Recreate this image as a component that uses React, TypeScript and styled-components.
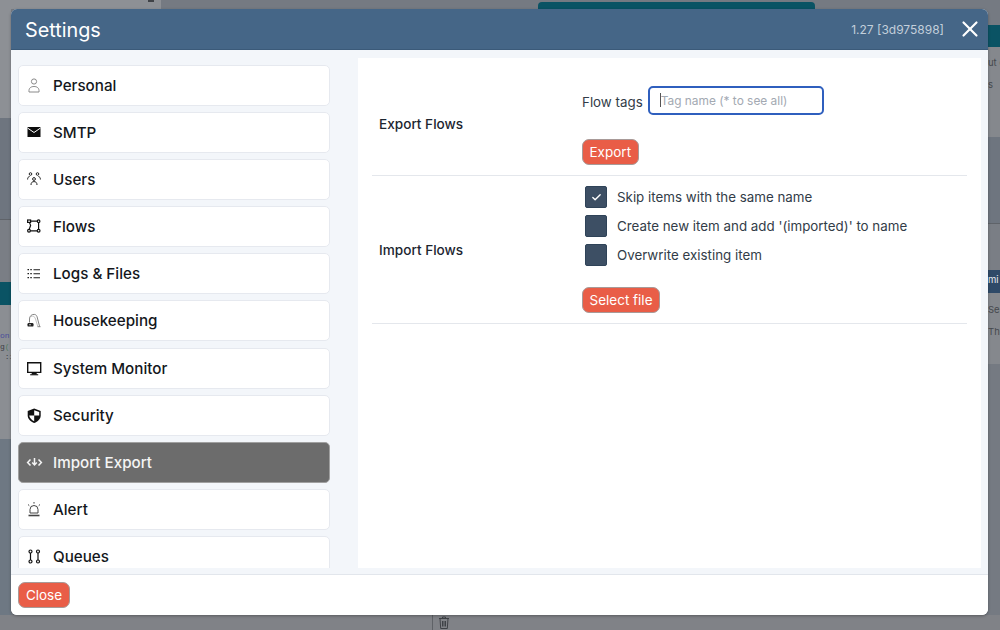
import React from 'react';
import styled, { createGlobalStyle } from 'styled-components';
import { X, Check } from 'lucide-react';

const GlobalStyle = createGlobalStyle`
  html, body {
    margin: 0;
    padding: 0;
    width: 1000px;
    height: 630px;
    overflow: hidden;
    font-family: Inter, "Liberation Sans", sans-serif;
  }
  * {
    box-sizing: border-box;
  }
`;

const Page = styled.div`
  position: relative;
  width: 1000px;
  height: 630px;
  background: #757a82;
  display: flex;
  flex-direction: column;
  overflow: hidden;
`;

const TopStrip = styled.div`
  height: 9px;
  display: flex;
  flex: none;
`;

const TopPanel = styled.div`
  width: 161px;
  padding-right: 7px;
  display: flex;
  justify-content: flex-end;
  background: #8d9095;
`;

const TopTick = styled.div`
  width: 6px;
  height: 2px;
  background: #3f4247;
`;

const TealTab = styled.div`
  width: 277px;
  height: 7px;
  margin: 2px 0 0 377px;
  background: #0a5364;
  border-radius: 4px 4px 0 0;
`;

const Middle = styled.div`
  flex: 1;
  display: flex;
  justify-content: space-between;
`;

const SideStrip = styled.div<{ $w: number }>`
  width: ${(p) => p.$w}px;
  display: flex;
  flex-direction: column;
`;

const Band = styled.div<{ $h: number; $bg: string }>`
  height: ${(p) => p.$h}px;
  background: ${(p) => p.$bg};
  flex: none;
`;

const CodeBand = styled(Band)`
  padding-top: 26px;
  overflow: hidden;
  white-space: pre;
  font-family: "Liberation Mono", monospace;
  font-size: 8px;
  line-height: 10.5px;
  color: #3c3f45;
`;

const CodeWord = styled.span<{ $color: string }>`
  color: ${(p) => p.$color};
`;

const TextBand = styled(Band)<{ $pt: number; $color?: string; $gap?: number }>`
  padding-top: ${(p) => p.$pt}px;
  overflow: hidden;
  white-space: pre;
  font-size: 9.5px;
  line-height: ${(p) => p.$gap || 12}px;
  color: ${(p) => p.$color || '#45484d'};
`;

const Bottom = styled.div`
  height: 15px;
  flex: none;
  display: flex;
  align-items: center;
  padding-left: 432px;
  background: #808287;
  color: #3f4247;
`;

const BottomRule = styled.div`
  width: 1px;
  height: 15px;
  background: #5f6267;
  margin-right: 5px;
`;

const Modal = styled.div`
  position: absolute;
  left: 11px;
  top: 9px;
  width: 977px;
  height: 606px;
  display: flex;
  flex-direction: column;
  border-radius: 6px;
  background: #f3f6fa;
  overflow: hidden;
  box-shadow: 0 1px 3px rgba(0, 0, 0, 0.3);
`;

const Header = styled.header`
  height: 41px;
  flex: none;
  display: flex;
  align-items: center;
  padding: 0 5px 0 14px;
  background: #456687;
  border-bottom: 1px solid #3b5a79;
  color: #fff;
`;

const Title = styled.h1`
  margin: 2px 0 0;
  flex: 1;
  font-size: 19.8px;
  font-weight: 400;
  color: #fff;
`;

const Version = styled.span`
  font-size: 12px;
  color: #c3cfdb;
  margin-right: 13px;
`;

const CloseIcon = styled.button`
  border: 0;
  padding: 0;
  background: none;
  color: #fff;
  display: flex;
`;

const Body = styled.div`
  flex: 1;
  min-height: 0;
  display: flex;
  padding: 8px 7px 6px 7px;
`;

const Sidebar = styled.nav`
  width: 312px;
  margin-right: 28px;
  flex: none;
  display: flex;
  flex-direction: column;
  gap: 6.1px;
  overflow: hidden;
  padding-top: 7px;
`;

const NavItem = styled.div<{ $active?: boolean }>`
  height: 41px;
  flex: none;
  display: flex;
  align-items: center;
  padding-left: 8px;
  border-radius: 5px;
  border: 1px solid ${(p) => (p.$active ? '#a0a0a0' : '#e6e9ef')};
  background: ${(p) => (p.$active ? '#6c6c6c' : '#fff')};
  color: ${(p) => (p.$active ? '#f4f4f4' : '#14171c')};
  font-size: 15.2px;
  font-weight: 500;
`;

const NavIcon = styled.svg`
  width: 15px;
  height: 15px;
  flex: none;
  margin-right: 11px;
  overflow: visible;
`;

const Content = styled.main`
  flex: 1;
  background: #fff;
  padding: 19px 14px 0 14px;
`;

const Section = styled.section<{ $h: number; $pb?: number }>`
  height: ${(p) => p.$h}px;
  padding-bottom: ${(p) => p.$pb || 0}px;
  display: flex;
  align-items: center;
  border-bottom: 1px solid #e4e7ec;
`;

const SectionLabel = styled.div<{ $lift?: number }>`
  width: 210px;
  padding-left: 7px;
  margin-bottom: ${(p) => p.$lift || 0}px;
  flex: none;
  font-size: 13.6px;
  font-weight: 500;
  color: #1c2530;
`;

const SectionBody = styled.div`
  display: flex;
  flex-direction: column;
  align-items: flex-start;
`;

const TagRow = styled.div`
  display: flex;
  align-items: center;
  font-size: 13.35px;
  color: #323c48;
  margin-bottom: 24px;
`;

const TagLabel = styled.span`
  padding-top: 3px;
`;

const TagInput = styled.div`
  width: 176px;
  height: 29px;
  margin-left: 5px;
  padding-left: 10px;
  display: flex;
  align-items: center;
  border: 2px solid #2f5fbe;
  border-radius: 5px;
  font-size: 11.9px;
  color: #a3a9b2;
`;

const Caret = styled.span`
  width: 1px;
  height: 14px;
  background: #555;
`;

const OptionRow = styled.label`
  display: flex;
  align-items: center;
  height: 22px;
  margin-bottom: 7px;
  padding-left: 3px;
  font-size: 13.35px;
  color: #323c48;
`;

const Box = styled.span`
  width: 22px;
  height: 22px;
  margin-right: 10px;
  display: flex;
  align-items: center;
  justify-content: center;
  border-radius: 2px;
  border: 1px solid #2f4358;
  background: #3d4f64;
  color: #fff;
`;

const ActionButton = styled.button<{ $mt?: number }>`
  height: 26px;
  min-width: 52px;
  margin-top: ${(p) => p.$mt || 0}px;
  padding: 0 6.5px;
  border: 1px solid #a89a98;
  border-radius: 7px;
  background: #e95d47;
  color: #fff;
  font-family: inherit;
  font-size: 13.5px;
`;

const Footer = styled.footer`
  height: 41px;
  flex: none;
  display: flex;
  align-items: center;
  padding-left: 7px;
  background: #fff;
  border-top: 1px solid #e2e6ec;
`;

const icons: Record<string, React.ReactNode> = {
  Personal: (
    <g fill="none" stroke="#8a8a8a" strokeWidth="1">
      <circle cx="7" cy="3.5" r="2.6" />
      <path d="M2 14 C1.5 9.5 4.5 8.5 7 8.5 C9.5 8.5 12.5 9.5 12 14 Z" />
    </g>
  ),
  SMTP: (
    <g>
      <rect x="0.5" y="2" width="13" height="10" fill="#0d0d0d" />
      <path d="M0.5 3l6.5 4.5L13.5 3" fill="none" stroke="#fff" strokeWidth="1" />
    </g>
  ),
  Users: (
    <g fill="none" stroke="#222" strokeWidth="1">
      <circle cx="3.5" cy="2" r="1.3" />
      <circle cx="10.5" cy="2" r="1.3" />
      <circle cx="7" cy="7" r="1.4" />
      <path d="M0.6 7.5c0-2 .8-2.8 2-3M13.4 7.5c0-2-.8-2.8-2-3M4 13c0-2.4 1.2-3.4 3-3.4s3 1 3 3.4" />
    </g>
  ),
  Flows: (
    <g fill="none" stroke="#111" strokeWidth="1.2">
      <rect x="0.6" y="1" width="3" height="2.4" />
      <circle cx="11.6" cy="2.2" r="1.3" />
      <circle cx="2" cy="11.8" r="1.4" />
      <circle cx="11.6" cy="11.8" r="1.4" />
      <path d="M3.6 2.2h6.7M3.4 11.8h6.9M2.4 3.4l1.2 3-1.4 4M11.6 3.5v7" />
    </g>
  ),
  'Logs & Files': (
    <g fill="#1d1d1d">
      <path d="M0.5 3h1.5v1.3H.5zM3.3 3h1.5v1.3H3.3zM.5 7h1.5v1.3H.5zM3.3 7h1.5v1.3H3.3zM.5 11h1.5v1.3H.5zM3.3 11h1.5v1.3H3.3z" />
      <path d="M6.5 3.2H13v1H6.5zM6.5 7.2H13v1H6.5zM6.5 11.2H13v1H6.5z" />
    </g>
  ),
  Housekeeping: (
    <g fill="none">
      <path d="M2.5 9.5V6C2.5 3 4.7 1.2 7.3 1.4 9.3 1.6 10 3 10.4 5L12.6 13.5" stroke="#777" strokeWidth="0.9" />
      <path d="M4 3.5C6 2.6 8 3.5 8.5 6L10.8 13.5" stroke="#aaa" strokeWidth="0.7" />
      <rect x="0.5" y="10" width="6" height="3.6" rx="1.2" fill="#222" />
      <circle cx="3" cy="11.8" r="0.7" fill="#fff" />
      <path d="M10.5 13.7h3" stroke="#777" strokeWidth="0.9" />
    </g>
  ),
  'System Monitor': (
    <g>
      <path d="M.7 1.8h13v9.6H.7z" fill="none" stroke="#111" strokeWidth="1.4" />
      <path d="M4.7 11.5h5V13.5H4.7z" fill="#111" />
      <path d="M3.2 13.2h8v1.1h-8z" fill="#111" />
    </g>
  ),
  Security: (
    <g>
      <path d="M7.2.5 13.7 3v4.5c0 3.5-3 6-6.5 7.5C3.7 13.5.7 11 .7 7.5V3z" fill="#111" />
      <path d="M7.2 2.2 12.2 4v3.5H7.2zM7.2 7.5v5.7C4.7 12 2.5 10 2.2 7.5z" fill="#fff" />
    </g>
  ),
  'Import Export': (
    <g fill="none" stroke="#f5f5f5" strokeWidth="1.5">
      <path d="M3.5 4.5.6 7.5l2.9 3M11.5 4.5l2.9 3-2.9 3" />
      <path d="M7.5 3v6.5M5.2 7.6l2.3 2.4 2.3-2.4" />
    </g>
  ),
  Alert: (
    <g fill="none" stroke="#444" strokeWidth="1">
      <path d="M3 11V7.5a4 4 0 0 1 8 0V11z" />
      <path d="M1.5 13.5h11" strokeWidth="1.6" />
      <path d="M7 0v1.6M1 2.5l1.3 1.2M13 2.5l-1.3 1.2" />
    </g>
  ),
  Queues: (
    <g fill="none" stroke="#111" strokeWidth="1.2">
      <circle cx="3.5" cy="2.5" r="1.5" />
      <circle cx="3.5" cy="12.5" r="1.5" />
      <circle cx="11" cy="2.5" r="1.5" />
      <circle cx="11" cy="12.5" r="1.5" />
      <path d="M3.5 4v7M11 4v7" />
    </g>
  ),
};

const navItems = Object.keys(icons);

const options = [
  { label: 'Skip items with the same name', checked: true },
  { label: "Create new item and add '(imported)' to name", checked: false },
  { label: 'Overwrite existing item', checked: false },
];

const App: React.FC = () => {
  return (
    <Page>
      <GlobalStyle />
      <TopStrip>
        <TopPanel>
          <TopTick />
        </TopPanel>
        <TealTab />
      </TopStrip>
      <Middle>
        <SideStrip $w={11}>
          <Band $h={109} $bg="#8d9095" />
          <Band $h={101} $bg="#6e757f" />
          <Band $h={1} $bg="#5f6369" />
          <Band $h={62} $bg="#7a7e85" />
          <Band $h={23} $bg="#0a5364" />
          <CodeBand $h={134} $bg="#8b8e93">
            <CodeWord $color="#4a4d9a">on</CodeWord>
            {'\ng'}
            <CodeWord $color="#4c7a5c">(</CodeWord>
            {'\n :i'}
          </CodeBand>
          <Band $h={176} $bg="#6e7883" />
        </SideStrip>
        <SideStrip $w={12}>
          <Band $h={16} $bg="#757a82" />
          <Band $h={22} $bg="#0a5364" />
          <TextBand $h={90} $bg="#85888d" $pt={5} $gap={22}>{'ut c\ns'}</TextBand>
          <Band $h={86} $bg="#6e757f" />
          <Band $h={1} $bg="#5f6369" />
          <Band $h={46} $bg="#7a7e85" />
          <TextBand $h={23} $bg="#2f4a68" $pt={4} $color="#e8edf2">mi</TextBand>
          <TextBand $h={71} $bg="#85888d" $pt={6} $gap={22}>{'Ser\nThr'}</TextBand>
          <Band $h={251} $bg="#757a82" />
        </SideStrip>
      </Middle>
      <Bottom>
        <BottomRule />
        <svg width="12" height="13" viewBox="0 0 12 13" fill="none" stroke="currentColor" strokeWidth="1">
          <path d="M1 2.5h10M4.5 2.5V1h3v1.5M2 2.5l.7 10h6.6l.7-10M4.5 5v5.5M6 5v5.5M7.5 5v5.5" />
        </svg>
      </Bottom>
      <Modal>
        <Header>
          <Title>Settings</Title>
          <Version>1.27 [3d975898]</Version>
          <CloseIcon>
            <X size={26} strokeWidth={2} />
          </CloseIcon>
        </Header>
        <Body>
          <Sidebar>
            {navItems.map((name) => (
              <NavItem key={name} $active={name === 'Import Export'}>
                <NavIcon viewBox="0 0 15 15">{icons[name]}</NavIcon>
                {name}
              </NavItem>
            ))}
          </Sidebar>
          <Content>
            <Section $h={99} $pb={2}>
              <SectionLabel $lift={2}>Export Flows</SectionLabel>
              <SectionBody>
                <TagRow>
                  <TagLabel>Flow tags</TagLabel>
                  <TagInput>
                    <Caret />
                    Tag name (* to see all)
                  </TagInput>
                </TagRow>
                <ActionButton>Export</ActionButton>
              </SectionBody>
            </Section>
            <Section $h={148}>
              <SectionLabel>Import Flows</SectionLabel>
              <SectionBody>
                {options.map((o) => (
                  <OptionRow key={o.label}>
                    <Box>{o.checked && <Check size={11} strokeWidth={3} />}</Box>
                    {o.label}
                  </OptionRow>
                ))}
                <ActionButton $mt={14}>Select file</ActionButton>
              </SectionBody>
            </Section>
          </Content>
        </Body>
        <Footer>
          <ActionButton>Close</ActionButton>
        </Footer>
      </Modal>
    </Page>
  );
};

export default App;
